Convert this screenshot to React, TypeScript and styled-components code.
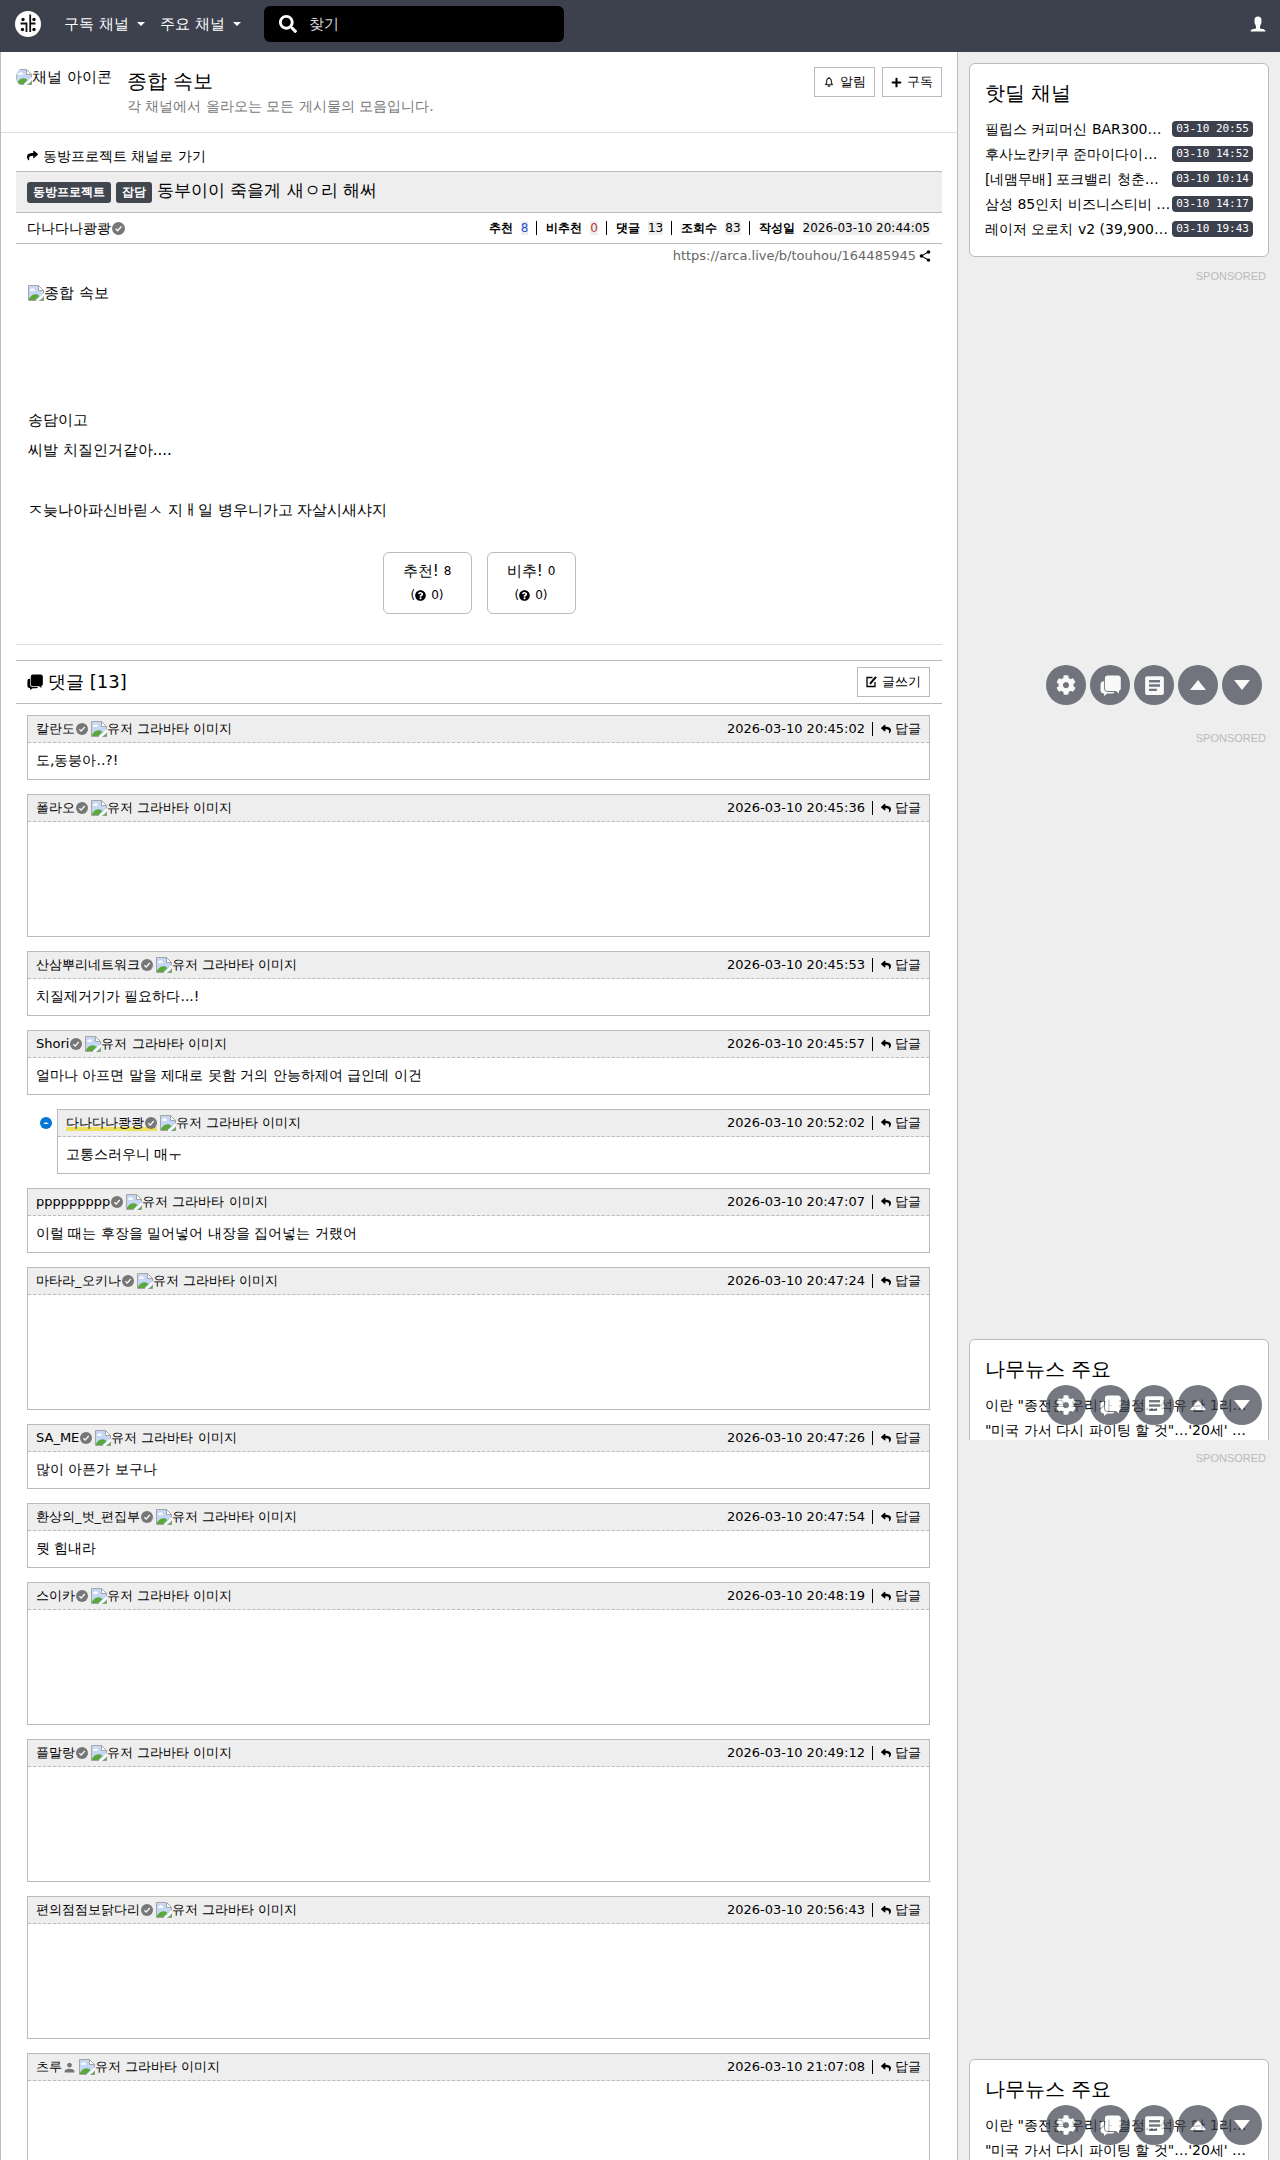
import React from 'react';
import styled, { createGlobalStyle } from 'styled-components';
import { IoIosPerson, IoMdListBox, IoMdShare, IoMdPerson, IoIosNotificationsOutline } from 'react-icons/io';
import { FaReply, FaShare, FaSearch, FaCog, FaPlus, FaQuestionCircle } from 'react-icons/fa';

const navy = '#3d414d';
const line = '#bbb';
const softLine = '#ddd';
const grey = '#eee';

const GlobalStyle = createGlobalStyle`
  *, *::before, *::after { box-sizing: border-box; }
  body {
    margin: 0;
    background: ${grey};
    color: #000;
    font-family: "DejaVu Sans", sans-serif;
    font-size: 15px;
    line-height: 20px;
  }
  a { color: inherit; text-decoration: none; }
  button, input { font: inherit; color: inherit; }
  button { cursor: pointer; }
  h1, h2, h3, p, ul, ol { margin: 0; padding: 0; font-weight: 400; }
  ul, ol { list-style: none; }
  svg { display: block; flex: none; }
`;

const Screen = styled.div`
  height: 100vh;
  overflow-y: auto;
  scrollbar-width: none;
`;

/* ---------- top bar ---------- */

const TopBar = styled.header`
  display: flex;
  align-items: center;
  height: 52px;
  padding: 0 12px 4px 15px;
  background: ${navy};
  color: #fff;
`;

const LogoLink = styled.a`
  margin-right: 23px;
`;

const NavButton = styled.button`
  display: flex;
  align-items: center;
  gap: 8px;
  margin-right: 15px;
  padding: 0;
  border: 0;
  background: none;
`;

const Caret = styled.span`
  border: 4px solid transparent;
  border-top-color: #fff;
  border-bottom: 0;
`;

const SearchBox = styled.label`
  display: flex;
  align-items: center;
  gap: 12px;
  width: 300px;
  height: 36px;
  margin: 0 auto 0 8px;
  padding: 0 15px;
  border-radius: 6px;
  background: #000;
`;

const SearchInput = styled.input`
  flex: 1;
  min-width: 0;
  padding: 0;
  border: 0;
  outline: 0;
  background: none;
  &::placeholder { color: #ddd; opacity: 1; }
`;

/* ---------- columns ---------- */

const Columns = styled.div`
  display: flex;
  align-items: stretch;
`;

const Main = styled.main`
  flex: 1;
  min-width: 0;
  border: solid ${line};
  border-width: 0 1px;
  background: #fff;
`;

const Sidebar = styled.aside`
  flex: 0 0 322px;
  padding: 0 11px;
`;

/* ---------- channel head ---------- */

const ChannelHead = styled.section`
  display: flex;
  align-items: flex-start;
  gap: 15px;
  padding: 15px;
  height: 81px;
  border-bottom: 1px solid ${softLine};
`;

const ChannelIcon = styled.div`
  width: 96px;
  overflow: hidden;
  border-radius: 10px;
`;

const ChannelText = styled.div`
  flex: 1;
  min-width: 0;
`;

const ChannelName = styled.h1`
  font-size: 20px;
  line-height: 28px;
`;

const ChannelNote = styled.p`
  font-size: 14px;
  line-height: 22px;
  color: #777;
`;

const ButtonRow = styled.div`
  display: flex;
  gap: 7px;
`;

const OutlineButton = styled.button`
  display: flex;
  align-items: center;
  gap: 5px;
  height: 30px;
  padding: 0 8px;
  border: 1px solid ${line};
  background: #fff;
  font-size: 13px;
`;

/* ---------- article ---------- */

const Article = styled.article`
  padding: 0 15px;
`;

const BackLink = styled.a`
  display: flex;
  align-items: center;
  gap: 5px;
  height: 38px;
  padding: 7px 11px 0;
  font-size: 14px;
`;

const TitleBar = styled.div`
  display: flex;
  align-items: center;
  gap: 5px;
  height: 42px;
  padding: 0 11px;
  border: solid ${line};
  border-width: 1px 0;
  background: ${grey};
`;

const Tag = styled.span`
  padding: 0 6px;
  border-radius: 3px;
  background: #42464f;
  color: #fff;
  font-size: 12px;
  font-weight: 700;
  line-height: 21px;
`;

const Title = styled.h2`
  padding-bottom: 4px;
  font-size: 17px;
`;

const InfoBar = styled.div`
  display: flex;
  align-items: center;
  justify-content: space-between;
  height: 31px;
  padding: 0 12px 0 11px;
  border-bottom: 1px solid ${line};
  font-size: 14px;
`;

const UserName = styled.a<{ $marked?: boolean }>`
  display: inline-flex;
  align-items: center;
  gap: 1px;
  background: ${p => (p.$marked ? 'linear-gradient(transparent 75%, #f0e060 75%)' : 'none')};
  line-height: 16px;
`;

const Facts = styled.dl`
  display: flex;
  margin: 0;
  font-size: 12px;
  line-height: 14px;
`;

const Fact = styled.div`
  display: flex;
  gap: 8px;
  & + & {
    margin-left: 8px;
    padding-left: 9px;
    border-left: 1px solid #000;
  }
`;

const FactName = styled.dt`
  font-weight: 700;
`;

const FactValue = styled.dd<{ $color?: string }>`
  margin: 0;
  background: ${grey};
  color: ${p => p.$color || '#000'};
`;

const LinkRow = styled.div`
  display: flex;
  align-items: center;
  justify-content: flex-end;
  gap: 2px;
  height: 24px;
  padding: 0 10px;
  font-size: 13px;
`;

const Permalink = styled.a`
  color: #666;
`;

const Body = styled.div`
  padding: 10px 12px 0;
  line-height: 30px;
`;

const BodyImage = styled.div`
  padding: 0 0 97px;
`;

const VoteRow = styled.div`
  display: flex;
  justify-content: center;
  gap: 15px;
  padding: 27px 0 30px;
  border-bottom: 1px solid ${softLine};
`;

const VoteButton = styled.button`
  width: 89px;
  height: 62px;
  padding: 0;
  border: 1px solid ${line};
  border-radius: 6px;
  background: #fff;
`;

const VoteLine = styled.span`
  display: flex;
  align-items: center;
  justify-content: center;
  line-height: 24px;
`;

const VoteCount = styled.span`
  padding-left: 5px;
  font-size: 12px;
`;

const Paren = styled.span`
  font-size: 12px;
`;

/* ---------- comments ---------- */

const Comments = styled.section`
  margin: 15px 15px 0;
`;

const CommentsHead = styled.div`
  display: flex;
  align-items: center;
  gap: 5px;
  height: 44px;
  padding: 0 12px 0 11px;
  border: solid ${line};
  border-width: 1px 0;
`;

const CommentsTitle = styled.h3`
  flex: 1;
  font-size: 18px;
`;

const CommentList = styled.ol`
  display: flex;
  flex-direction: column;
  gap: 14px;
  padding: 11px 12px 14px 11px;
`;

const CommentItem = styled.li`
  display: flex;
  align-items: flex-start;
`;

const ReplyMark = styled.span`
  display: flex;
  align-items: center;
  justify-content: center;
  flex: none;
  width: 12px;
  height: 12px;
  margin: 8px 5px 0 13px;
  border-radius: 50%;
  background: #0275d8;
`;

const UpCaret = styled.span`
  border: 3px solid transparent;
  border-bottom: 2px solid #fff;
  border-top: 0;
`;

const CommentBox = styled.div`
  flex: 1;
  min-width: 0;
  border: 1px solid ${line};
`;

const CommentHead = styled.div`
  display: flex;
  align-items: center;
  gap: 3px;
  height: 27px;
  padding: 0 8px;
  border-bottom: 1px dashed ${line};
  background: ${grey};
  font-size: 13px;
`;

const CommentTime = styled.time`
  margin-left: auto;
`;

const ReplyLink = styled.a`
  display: flex;
  align-items: center;
  gap: 4px;
  margin-left: 4px;
  padding-left: 8px;
  line-height: 14px;
  border-left: 1px solid #000;
`;

const CommentText = styled.p`
  padding: 7px 8px 9px;
  font-size: 14px;
`;

const CommentMedia = styled.div`
  height: 114px;
`;

const AltImage = styled.span`
  display: flex;
  align-items: center;
  white-space: nowrap;
`;

/* ---------- sidebar ---------- */

const Slice = styled.section<{ $first?: boolean }>`
  position: relative;
  height: ${p => (p.$first ? '668px' : '720px')};
  padding-top: 11px;
  overflow: hidden;
`;

const Card = styled.section`
  padding: 14px 15px 15px;
  border: 1px solid ${line};
  border-radius: 6px;
  background: #fff;
`;

const CardTitle = styled.h2`
  margin-bottom: 8px;
  font-size: 20px;
  line-height: 30px;
`;

const CardRow = styled.li`
  display: flex;
  align-items: center;
  justify-content: space-between;
  height: 25px;
  font-size: 14px;
  white-space: nowrap;
`;

const Stamp = styled.time`
  padding: 0 4px;
  border-radius: 4px;
  background: ${navy};
  color: #fff;
  font-family: "DejaVu Sans Mono", monospace;
  font-size: 11px;
  line-height: 16px;
`;

const AdLabel = styled.p<{ $below?: boolean }>`
  margin-top: ${p => (p.$below ? '12px' : '0')};
  padding-right: 3px;
  color: ${line};
  font-family: "Liberation Sans", sans-serif;
  font-size: 11px;
  line-height: 14px;
  text-align: right;
`;

const AdSpace = styled.div`
  height: 594px;
`;

const FloatBar = styled.nav`
  position: absolute;
  right: 7px;
  bottom: 15px;
  display: flex;
  gap: 4px;
`;

const RoundButton = styled.button`
  display: flex;
  align-items: center;
  justify-content: center;
  width: 40px;
  height: 40px;
  padding: 0;
  border: 0;
  border-radius: 50%;
  background: ${navy};
  color: #fff;
  opacity: 0.7;
`;

/* ---------- drawings ---------- */

const Logo = () => (
  <svg width="26" height="26" viewBox="0 0 26 26" aria-hidden="true">
    <circle cx="13" cy="13" r="13" fill="#fff" />
    <g fill="none" stroke="#111" strokeWidth="1.8">
      <path d="M15.2 3.500v17.500M5.500 12.500h6v8.500M15.2 12.500H20.500" />
    </g>
    <g fill="#111">
      <circle cx="8" cy="8.500" r="1.700" />
      <circle cx="19" cy="8.500" r="1.700" />
      <circle cx="7.500" cy="18.500" r="1.700" />
      <circle cx="19" cy="18.500" r="1.700" />
    </g>
  </svg>
);

const BrokenPicture = () => (
  <svg width="16" height="16" viewBox="0 0 16 16" aria-hidden="true">
    <path d="M.5.5h10l5 5v10H.5z" fill="#c6d7f5" stroke="#a5a5a5" />
    <path d="M10.5.5v5h5z" fill="#fff" stroke="#a5a5a5" />
    <path d="M2 5.200c0-1 .8-1.400 1.500-1.200.4-1.200 2.400-1.100 2.700.2 1 0 1.300 1.600.2 1.600H3c-.6 0-1-.2-1-.6z" fill="#fff" />
    <path d="M1 15v-1.500C3 10.500 5.500 9 8 9.200c1.500.2 2.500.8 3.500 1.800L7.500 15z" fill="#5aa83c" />
    <path d="M16 8l-8 7.500v.5h2.500L16 11z" fill="#fff" />
    <path d="M12 15.500l3.500-3v3z" fill="#5aa83c" />
  </svg>
);

const Check = ({ size }: { size: number }) => (
  <svg width={size} height={size} viewBox="0 0 12 12" aria-hidden="true">
    <circle cx="6" cy="6" r="6" fill="#777" />
    <path d="M3.400 6.300l1.800 1.800 3.500-4.100" fill="none" stroke="#fff" strokeWidth="1.300" />
  </svg>
);

const Bubbles = ({ size }: { size: number }) => (
  <svg width={size} height={size} viewBox="0 0 20 20" fill="currentColor" aria-hidden="true">
    <path d="M7.500.500H17A2.800 2.800 0 0 1 19.800 3.300V12.500a2.800 2.800 0 0 1-1.800 2.600v2.400l-2.800-2.200H7.500a2.800 2.800 0 0 1-2.800-2.800V3.300A2.800 2.800 0 0 1 7.500.500z" />
    <path d="M3.900 6v6.700a3.400 3.400 0 0 0 3.400 3.400h6.500a2.800 2.800 0 0 1-2.500 1.600H7L3.800 20v-2.400a3 3 0 0 1-3.300-3V9a3 3 0 0 1 3.400-3z" />
  </svg>
);

const Compose = () => (
  <svg width="11" height="12" viewBox="0 0 11 12" fill="none" stroke="currentColor" aria-hidden="true">
    <path d="M6.500 1.500H1v9h8V6" strokeWidth="1.300" />
    <path d="M4 7.800l6-7" strokeWidth="2" />
  </svg>
);

const Triangle = ({ up }: { up?: boolean }) => (
  <svg width="16" height="10" viewBox="0 0 16 10" fill="currentColor" aria-hidden="true">
    <path d={up ? 'M8 0l8 10H0z' : 'M0 0h16L8 10z'} />
  </svg>
);

/* ---------- data ---------- */

const facts = [
  { name: '추천', value: '8', color: '#2b50d8' },
  { name: '비추천', value: '0', color: '#c03434' },
  { name: '댓글', value: '13' },
  { name: '조회수', value: '83' },
  { name: '작성일', value: '2026-03-10 20:44:05' },
];

type Comment = { user: string; time: string; text?: string; reply?: boolean; half?: boolean };

const comments: Comment[] = [
  { user: '칼란도', time: '20:45:02', text: '도,동붕아..?!' },
  { user: '폴라오', time: '20:45:36' },
  { user: '산삼뿌리네트워크', time: '20:45:53', text: '치질제거기가 필요하다...!' },
  { user: 'Shori', time: '20:45:57', text: '얼마나 아프면 말을 제대로 못함 거의 안능하제여 급인데 이건' },
  { user: '다나다나쾅쾅', time: '20:52:02', text: '고통스러우니 매ㅜ', reply: true },
  { user: 'ppppppppp', time: '20:47:07', text: '이럴 때는 후장을 밀어넣어 내장을 집어넣는 거랬어' },
  { user: '마타라_오키나', time: '20:47:24' },
  { user: 'SA_ME', time: '20:47:26', text: '많이 아픈가 보구나' },
  { user: '환상의_벗_편집부', time: '20:47:54', text: '뭣 힘내라' },
  { user: '스이카', time: '20:48:19' },
  { user: '플말랑', time: '20:49:12' },
  { user: '편의점점보닭다리', time: '20:56:43' },
  { user: '츠루', time: '21:07:08', half: true },
];

const deals = [
  ['필립스 커피머신 BAR300…', '03-10 20:55'],
  ['후사노칸키쿠 준마이다이…', '03-10 14:52'],
  ['[네맴무배] 포크밸리 청춘…', '03-10 10:14'],
  ['삼성 85인치 비즈니스티비 …', '03-10 14:17'],
  ['레이저 오로치 v2 (39,900…', '03-10 19:43'],
];

const news = ['이란 "종전은 우리가 결정…석유 단 1리…', '"미국 가서 다시 파이팅 할 것"…\'20세\' …'];

/* ---------- parts ---------- */

const Picture = ({ alt }: { alt: string }) => (
  <AltImage role="img" aria-label={alt}>
    <BrokenPicture />
    {alt}
  </AltImage>
);

const Floating = () => (
  <FloatBar aria-label="바로가기">
    <RoundButton aria-label="설정"><FaCog size={20} /></RoundButton>
    <RoundButton aria-label="댓글"><Bubbles size={21} /></RoundButton>
    <RoundButton aria-label="목록"><IoMdListBox size={25} /></RoundButton>
    <RoundButton aria-label="위로"><Triangle up /></RoundButton>
    <RoundButton aria-label="아래로"><Triangle /></RoundButton>
  </FloatBar>
);

const NewsSlice = () => (
  <Slice>
    <AdLabel>SPONSORED</AdLabel>
    <AdSpace />
    <Card>
      <CardTitle>나무뉴스 주요</CardTitle>
      <ul>
        {news.map(n => (
          <CardRow key={n}><a href="#news">{n}</a></CardRow>
        ))}
      </ul>
    </Card>
    <Floating />
  </Slice>
);

const Entry = ({ c }: { c: Comment }) => (
  <CommentItem>
    {c.reply && <ReplyMark><UpCaret /></ReplyMark>}
    <CommentBox>
      <CommentHead>
        <UserName href="#user" $marked={c.reply}>
          {c.user}
          {c.half ? <IoMdPerson size={13} color="#777" /> : <Check size={12} />}
        </UserName>
        <Picture alt="유저 그라바타 이미지" />
        <CommentTime>2026-03-10 {c.time}</CommentTime>
        <ReplyLink href="#reply"><FaReply size={10} />답글</ReplyLink>
      </CommentHead>
      {c.text ? <CommentText>{c.text}</CommentText> : <CommentMedia />}
    </CommentBox>
  </CommentItem>
);

const Vote = ({ label, count }: { label: string; count: number }) => (
  <VoteButton>
    <VoteLine>{label}<VoteCount>{count}</VoteCount></VoteLine>
    <VoteLine>
      <Paren>(</Paren>
      <FaQuestionCircle size={11} />
      <VoteCount>0)</VoteCount>
    </VoteLine>
  </VoteButton>
);

export default function App() {
  return (
    <Screen>
      <GlobalStyle />
      <TopBar>
        <LogoLink href="#home" aria-label="홈"><Logo /></LogoLink>
        <NavButton>구독 채널<Caret /></NavButton>
        <NavButton>주요 채널<Caret /></NavButton>
        <SearchBox>
          <FaSearch size={18} />
          <SearchInput type="search" placeholder="찾기" aria-label="찾기" />
        </SearchBox>
        <a href="#account" aria-label="계정"><IoIosPerson size={20} /></a>
      </TopBar>
      <Columns>
        <Main>
          <ChannelHead>
            <ChannelIcon><Picture alt="채널 아이콘" /></ChannelIcon>
            <ChannelText>
              <ChannelName>종합 속보</ChannelName>
              <ChannelNote>각 채널에서 올라오는 모든 게시물의 모음입니다.</ChannelNote>
            </ChannelText>
            <ButtonRow>
              <OutlineButton><IoIosNotificationsOutline size={12} strokeWidth={16} stroke="#000" />알림</OutlineButton>
              <OutlineButton><FaPlus size={11} />구독</OutlineButton>
            </ButtonRow>
          </ChannelHead>
          <Article>
            <BackLink href="#channel"><FaShare size={11} />동방프로젝트 채널로 가기</BackLink>
            <TitleBar>
              <Tag>동방프로젝트</Tag>
              <Tag>잡담</Tag>
              <Title>동부이이 죽을게 새ㅇ리 해써</Title>
            </TitleBar>
            <InfoBar>
              <UserName href="#user">다나다나쾅쾅<Check size={13} /></UserName>
              <Facts>
                {facts.map(f => (
                  <Fact key={f.name}>
                    <FactName>{f.name}</FactName>
                    <FactValue $color={f.color}>{f.value}</FactValue>
                  </Fact>
                ))}
              </Facts>
            </InfoBar>
            <LinkRow>
              <Permalink href="#link">https://arca.live/b/touhou/164485945</Permalink>
              <IoMdShare size={14} />
            </LinkRow>
            <Body>
              <BodyImage><Picture alt="종합 속보" /></BodyImage>
              <p>송담이고</p>
              <p>씨발 치질인거같아....</p>
              <br />
              <p>ㅈ늦나아파신바릳ㅅ 지ㅐ일 병우니가고 자살시새샤지</p>
            </Body>
            <VoteRow>
              <Vote label="추천!" count={8} />
              <Vote label="비추!" count={0} />
            </VoteRow>
          </Article>
          <Comments>
            <CommentsHead>
              <Bubbles size={16} />
              <CommentsTitle>댓글 [13]</CommentsTitle>
              <OutlineButton><Compose />글쓰기</OutlineButton>
            </CommentsHead>
            <CommentList>
              {comments.map(c => <Entry key={c.time} c={c} />)}
            </CommentList>
          </Comments>
        </Main>
        <Sidebar>
          <Slice $first>
            <Card>
              <CardTitle>핫딜 채널</CardTitle>
              <ul>
                {deals.map(([name, time]) => (
                  <CardRow key={name}><a href="#deal">{name}</a><Stamp>{time}</Stamp></CardRow>
                ))}
              </ul>
            </Card>
            <AdLabel $below>SPONSORED</AdLabel>
            <Floating />
          </Slice>
          <NewsSlice />
          <NewsSlice />
        </Sidebar>
      </Columns>
    </Screen>
  );
}
